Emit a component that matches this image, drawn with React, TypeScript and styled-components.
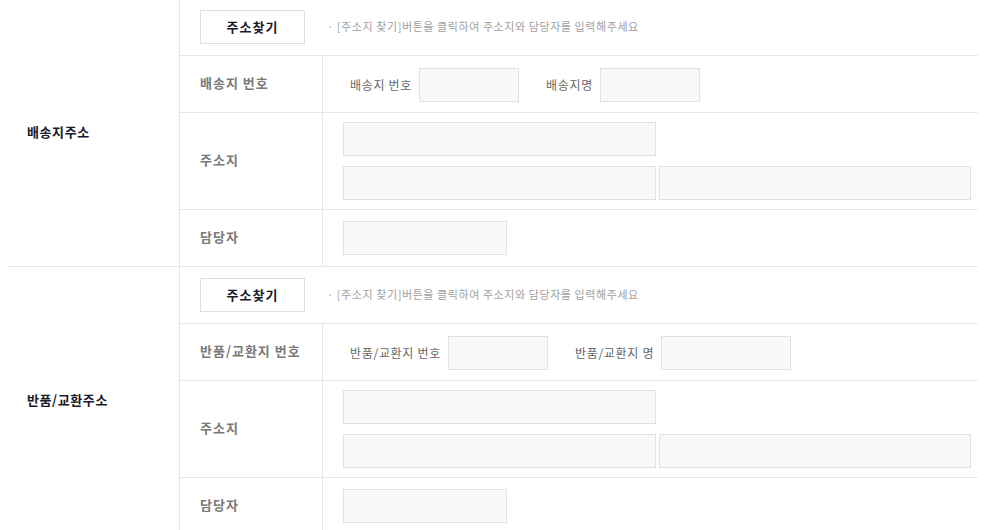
import React from "react";
import styled, { createGlobalStyle } from "styled-components";

const Global = createGlobalStyle`
  html, body { margin: 0; padding: 0; background: #fff; }
  body { font-family: "Noto Sans CJK KR", "Noto Sans", sans-serif; }
  * { box-sizing: border-box; }
`;

const LINE = "#e6e6e6";

const Page = styled.div`
  margin-top: -1px;
  padding-left: 7px;
  width: 978px;
`;

const Section = styled.section`
  display: grid;
  grid-template-columns: 173px 1fr;
  border-bottom: 1px solid ${LINE};
`;

const SectionHead = styled.div`
  display: flex;
  align-items: center;
  padding: 0 0 3px 20px;
  border-right: 1px solid ${LINE};
  font-size: 13px;
  font-weight: 700;
  color: #1a1a2a;
  letter-spacing: 0.6px;
`;

const SectionBody = styled.div`
  display: flex;
  flex-direction: column;
`;

const Row = styled.div<{ $tall?: boolean }>`
  display: grid;
  grid-template-columns: 143px 1fr;
  height: ${(p) => (p.$tall ? 97 : 57)}px;
  border-bottom: 1px solid ${LINE};
  &:last-child {
    border-bottom: none;
    height: ${(p) => (p.$tall ? 96 : 56)}px;
  }
`;

const FullRow = styled.div`
  display: flex;
  align-items: center;
  height: 57px;
  padding: 0 20px;
  border-bottom: 1px solid ${LINE};
`;

const FindButton = styled.button`
  width: 105px;
  height: 34px;
  border: 1px solid #dedede;
  background: #fff;
  font-family: inherit;
  font-size: 13px;
  font-weight: 700;
  color: #1a1a2a;
  letter-spacing: 1px;
  padding: 0 0 1px;
  cursor: pointer;
`;

const Hint = styled.span`
  margin: 0 0 2px 22px;
  font-size: 11px;
  color: #a0a0a0;
  letter-spacing: 0.58px;
`;

const Label = styled.div`
  display: flex;
  align-items: center;
  padding: 0 0 3px 20px;
  border-right: 1px solid ${LINE};
  font-size: 13px;
  font-weight: 700;
  color: #7a7a7a;
  letter-spacing: 1px;
`;

const Cell = styled.div<{ $top?: number }>`
  display: flex;
  align-items: flex-start;
  padding: ${(p) => p.$top ?? 11}px 0 0 20px;
  gap: 20px;
`;

const Group = styled.div`
  display: flex;
  align-items: center;
`;

const FieldName = styled.span`
  margin: 0 7px 2px 7px;
  font-size: 12px;
  color: #666;
  letter-spacing: 0.7px;
`;

const Input = styled.input<{ $w: number }>`
  width: ${(p) => p.$w}px;
  height: 34px;
  border: 1px solid #dfe1e2;
  background: #f8f9f9;
  padding: 0 8px;
  font-family: inherit;
  font-size: 12px;
  outline: none;
  margin: 0;
`;

const AddressGrid = styled.div`
  display: grid;
  grid-template-columns: 313px 312px;
  column-gap: 3px;
  row-gap: 10px;
`;

type Props = {
  title: string;
  numberLabel: string;
  nameLabel: string;
  nameWidth: number;
};

function AddressSection({ title, numberLabel, nameLabel, nameWidth }: Props) {
  return (
    <Section>
      <SectionHead>{title}</SectionHead>
      <SectionBody>
        <FullRow>
          <FindButton type="button">주소찾기</FindButton>
          <Hint>· [주소지 찾기]버튼을 클릭하여 주소지와 담당자를 입력해주세요</Hint>
        </FullRow>
        <Row>
          <Label>{numberLabel}</Label>
          <Cell $top={12}>
            <Group>
              <FieldName>{numberLabel}</FieldName>
              <Input $w={100} />
            </Group>
            <Group>
              <FieldName>{nameLabel}</FieldName>
              <Input $w={nameWidth} />
            </Group>
          </Cell>
        </Row>
        <Row $tall>
          <Label>주소지</Label>
          <Cell $top={9}>
            <AddressGrid>
              <Input $w={313} />
              <span />
              <Input $w={313} />
              <Input $w={312} />
            </AddressGrid>
          </Cell>
        </Row>
        <Row>
          <Label>담당자</Label>
          <Cell $top={11}>
            <Input $w={164} />
          </Cell>
        </Row>
      </SectionBody>
    </Section>
  );
}

export default function App() {
  return (
    <>
      <Global />
      <Page>
        <AddressSection title="배송지주소" numberLabel="배송지 번호" nameLabel="배송지명" nameWidth={100} />
        <AddressSection title="반품/교환주소" numberLabel="반품/교환지 번호" nameLabel="반품/교환지 명" nameWidth={130} />
      </Page>
    </>
  );
}
